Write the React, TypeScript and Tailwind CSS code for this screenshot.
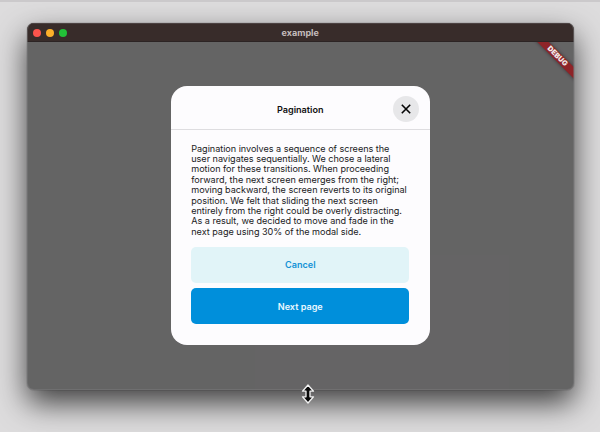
const lines = [
  'Pagination involves a sequence of screens the',
  'user navigates sequentially. We chose a lateral',
  'motion for these transitions. When proceeding',
  'forward, the next screen emerges from the right;',
  'moving backward, the screen reverts to its original',
  'position. We felt that sliding the next screen',
  'entirely from the right could be overly distracting.',
  'As a result, we decided to move and fade in the',
  'next page using 30% of the modal side.',
];

function TitleBar() {
  return (
    <header className="grid h-[19px] shrink-0 grid-cols-3 items-center bg-[#382c2b] px-[5.5px] shadow-[inset_0_1px_0_#4d4342,inset_0_-1px_0_#2d2424]">
      <div className="flex gap-[5px]">
        <span className="size-2 rounded-full bg-[#fc544d]" />
        <span className="size-2 rounded-full bg-[#fdb02a]" />
        <span className="size-2 rounded-full bg-[#23c138]" />
      </div>
      <h1 className="text-center text-[9px] leading-none font-bold text-[#c4bcbb]">example</h1>
    </header>
  );
}

function Modal() {
  return (
    <section className="flex h-[259.5px] w-[259px] flex-col overflow-hidden rounded-[16px] bg-[#fdfcfe]">
      <div className="grid h-[44px] shrink-0 grid-cols-[1fr_auto_1fr] items-center border-b border-[#dedde0] px-[10.5px] pt-[4px]">
        <span />
        <h2 className="pt-px text-[9.1px] leading-none font-semibold text-[#111]">Pagination</h2>
        <button className="flex size-[26px] items-center justify-center justify-self-end rounded-full bg-[#e7e7e9]" aria-label="Close">
          <svg viewBox="0 0 10 10" className="size-[10px]" fill="none" stroke="#050505" strokeWidth="1.6">
            <path d="M.8.8 9.2 9.2M9.2.8.8 9.2" />
          </svg>
        </button>
      </div>
      <div className="flex flex-col px-[20.5px] pt-[14px]">
        <p className="text-[9.1px] leading-[10.4px] tracking-[-0.03px] whitespace-nowrap text-[#1b1b1d]">
          {lines.map((line) => (
            <span key={line} className="block">{line}</span>
          ))}
        </p>
        <button className="mt-[9.5px] h-[36px] rounded-[5px] bg-[#e1f4f8] text-[9.1px] font-semibold text-[#1492d6]">Cancel</button>
        <button className="mt-[5.5px] h-[36px] rounded-[5px] bg-[#008fdb] pt-px text-[9.1px] font-semibold text-[#eaf8ff]">Next page</button>
      </div>
    </section>
  );
}

export default function App() {
  return (
    <main className="relative h-[432px] w-[600px] overflow-hidden border-t-2 border-[#cbc9cb] bg-[#dddcdd] px-[27px] pt-[21px] font-['Inter','Liberation_Sans',sans-serif]">
      <div className="flex h-[367px] w-[546.5px] flex-col rounded-[7px] shadow-[0_13px_30px_rgba(0,0,0,0.72),0_0_1px_#333]">
        <div className="relative flex h-full flex-col overflow-hidden rounded-[7px] bg-[#656465]">
          <TitleBar />
          <div className="relative flex flex-1 justify-center overflow-hidden pt-[43.5px]">
            <Modal />
            <div className="absolute top-[10.5px] right-[-14px] flex h-[8px] w-[60px] rotate-45 items-center justify-center bg-[#8e2528] pr-[2px] text-[7.2px] leading-none font-black text-[#f1e8e8] shadow-[0_0_4px_rgba(0,0,0,0.45)]">DEBUG</div>
          </div>
          <div className="pointer-events-none absolute inset-0 rounded-[7px] border border-t-0 border-[#7b7b7c] opacity-50" />
        </div>
      </div>
      <svg className="absolute top-[382px] left-[301px] h-[20px] w-[14px]" viewBox="0 0 14 20">
        <path d="M7 1 12.5 7.2H9V12.8H12.5L7 19 1.5 12.8H5V7.2H1.5Z" fill="#090909" stroke="#f2f2f2" strokeWidth="1.3" strokeLinejoin="round" />
      </svg>
    </main>
  );
}
